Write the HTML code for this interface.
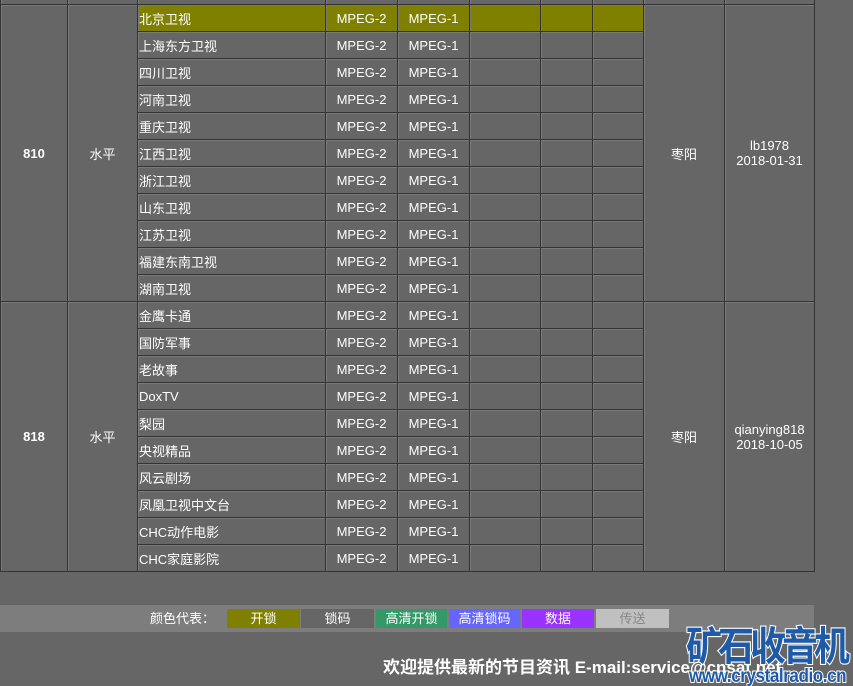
<!DOCTYPE html>
<html><head><meta charset="utf-8"><style>
html{overflow:hidden}
body{margin:0;width:853px;height:686px;background:#666;overflow:hidden;position:relative;font-family:"Liberation Sans","Noto Sans CJK SC",sans-serif;color:#fff;font-size:13px}
table{position:absolute;left:0;top:-23px;border-collapse:collapse;table-layout:fixed;width:815px}
td{border:1px solid #333;box-shadow:inset 1px 1px 0 #7a7a7a;height:26px;padding:0;text-align:center;white-space:nowrap;overflow:hidden}
td.c{text-align:left;padding-left:1px}
tr.hl td.h{background:#808000}
.b{font-weight:bold}
.leg{position:absolute;left:0;top:605px;width:814px;height:27px;background:#7d7d7d}
.leg span{position:absolute;top:4px;height:19px;line-height:19px;text-align:center;font-size:13px}
.foot{position:absolute;left:383px;top:653px;font-size:17px;font-weight:bold;white-space:nowrap}
.logo{position:absolute;left:686px;top:617px;font-size:36px;font-weight:bold;color:#1d5aa8;letter-spacing:-4px;-webkit-text-stroke:2px #fff;paint-order:stroke fill;font-family:"Noto Sans CJK SC",sans-serif;line-height:48px;white-space:nowrap;transform:scale(1,1.1);transform-origin:left top}
.url{position:absolute;left:689px;top:667px;font-size:19px;line-height:20px;font-weight:bold;color:#1d5aa8;-webkit-text-stroke:2px #fff;paint-order:stroke fill;transform:scaleX(0.9);transform-origin:left;letter-spacing:-0.5px;white-space:nowrap}
</style></head><body>
<table>
<colgroup><col style="width:67px"><col style="width:70px"><col style="width:188px"><col style="width:72px"><col style="width:72px"><col style="width:71px"><col style="width:52px"><col style="width:51px"><col style="width:81px"><col style="width:90px"></colgroup>
<tr><td></td><td></td><td></td><td></td><td></td><td></td><td></td><td></td><td></td><td></td></tr>
<tr class="hl"><td rowspan="11" class="b">810</td><td rowspan="11">水平</td><td class="c h">北京卫视</td><td class="h">MPEG-2</td><td class="h">MPEG-1</td><td class="h"></td><td class="h"></td><td class="h"></td><td rowspan="11">枣阳</td><td rowspan="11">lb1978<br>2018-01-31</td></tr>
<tr><td class="c">上海东方卫视</td><td>MPEG-2</td><td>MPEG-1</td><td></td><td></td><td></td></tr>
<tr><td class="c">四川卫视</td><td>MPEG-2</td><td>MPEG-1</td><td></td><td></td><td></td></tr>
<tr><td class="c">河南卫视</td><td>MPEG-2</td><td>MPEG-1</td><td></td><td></td><td></td></tr>
<tr><td class="c">重庆卫视</td><td>MPEG-2</td><td>MPEG-1</td><td></td><td></td><td></td></tr>
<tr><td class="c">江西卫视</td><td>MPEG-2</td><td>MPEG-1</td><td></td><td></td><td></td></tr>
<tr><td class="c">浙江卫视</td><td>MPEG-2</td><td>MPEG-1</td><td></td><td></td><td></td></tr>
<tr><td class="c">山东卫视</td><td>MPEG-2</td><td>MPEG-1</td><td></td><td></td><td></td></tr>
<tr><td class="c">江苏卫视</td><td>MPEG-2</td><td>MPEG-1</td><td></td><td></td><td></td></tr>
<tr><td class="c">福建东南卫视</td><td>MPEG-2</td><td>MPEG-1</td><td></td><td></td><td></td></tr>
<tr><td class="c">湖南卫视</td><td>MPEG-2</td><td>MPEG-1</td><td></td><td></td><td></td></tr>
<tr><td rowspan="10" class="b">818</td><td rowspan="10">水平</td><td class="c">金鹰卡通</td><td>MPEG-2</td><td>MPEG-1</td><td></td><td></td><td></td><td rowspan="10">枣阳</td><td rowspan="10">qianying818<br>2018-10-05</td></tr>
<tr><td class="c">国防军事</td><td>MPEG-2</td><td>MPEG-1</td><td></td><td></td><td></td></tr>
<tr><td class="c">老故事</td><td>MPEG-2</td><td>MPEG-1</td><td></td><td></td><td></td></tr>
<tr><td class="c">DoxTV</td><td>MPEG-2</td><td>MPEG-1</td><td></td><td></td><td></td></tr>
<tr><td class="c">梨园</td><td>MPEG-2</td><td>MPEG-1</td><td></td><td></td><td></td></tr>
<tr><td class="c">央视精品</td><td>MPEG-2</td><td>MPEG-1</td><td></td><td></td><td></td></tr>
<tr><td class="c">风云剧场</td><td>MPEG-2</td><td>MPEG-1</td><td></td><td></td><td></td></tr>
<tr><td class="c">凤凰卫视中文台</td><td>MPEG-2</td><td>MPEG-1</td><td></td><td></td><td></td></tr>
<tr><td class="c">CHC动作电影</td><td>MPEG-2</td><td>MPEG-1</td><td></td><td></td><td></td></tr>
<tr><td class="c">CHC家庭影院</td><td>MPEG-2</td><td>MPEG-1</td><td></td><td></td><td></td></tr>
</table>
<div class="leg">
<span style="left:150px">颜色代表：</span>
<span style="left:227px;width:73px;background:#808000">开锁</span>
<span style="left:301px;width:73px;background:#666">锁码</span>
<span style="left:376px;width:71px;background:#339966">高清开锁</span>
<span style="left:449px;width:71px;background:#6666ff">高清锁码</span>
<span style="left:522px;width:72px;background:#9933ff">数据</span>
<span style="left:596px;width:73px;background:#c0c0c0;color:#888">传送</span>
</div>
<div class="foot">欢迎提供最新的节目资讯 E-mail:service@cnsat.net</div>
<div class="logo">矿石收音机</div>
<div class="url">www.crystalradio.cn</div>
</body></html>
